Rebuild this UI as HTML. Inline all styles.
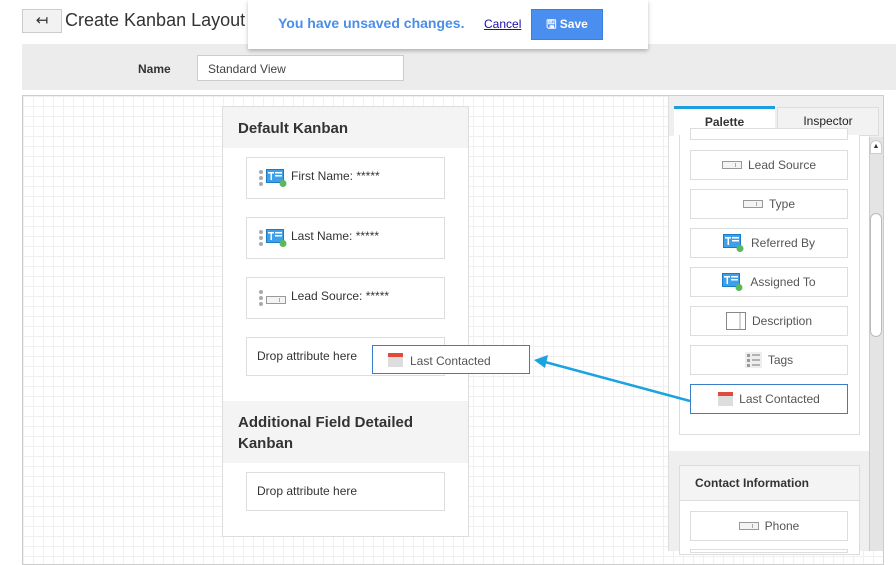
<!DOCTYPE html>
<html><head><meta charset="utf-8"><style>
*{box-sizing:border-box;margin:0;padding:0}
body{width:896px;height:551px;overflow:hidden;background:#fff;font-family:"Liberation Sans",Arial,sans-serif;color:#333;position:relative}
.abs{position:absolute}
.grid{background-color:#fff;background-image:linear-gradient(#f0f0f0 1px,transparent 1px),linear-gradient(90deg,#f0f0f0 1px,transparent 1px);background-size:10px 10px}
.field{position:absolute;left:246px;width:199px;background:#fff;border:1px solid #ddd;font-size:12px;color:#333}
.pitem{position:absolute;left:690px;width:158px;height:30px;background:#fff;border:1px solid #ddd;font-size:12px;color:#555;display:flex;align-items:center;justify-content:center;gap:6px}
.sel{display:inline-block;width:20px;height:8px;border:1px solid #999;background:#f4f4f4;position:relative}
.sel:after{content:"";position:absolute;right:1px;top:1px;width:4px;height:4px;border-left:1px solid #aaa}
.dots{position:absolute;left:12px;top:12px;width:4px}
.dots i{display:block;width:4px;height:4px;border-radius:2px;background:#aaa;margin-bottom:2px}
</style></head><body>
<div class="abs" style="left:22px;top:9px;width:40px;height:24px;border:1px solid #ccc;background:#f2f2f2;text-align:center;font-size:15px;line-height:21px">&#8612;</div>
<div class="abs" style="left:65px;top:10px;font-size:18px;color:#333">Create Kanban Layout</div>
<div class="abs" style="left:22px;top:44px;width:874px;height:46px;background:#ececec"></div>
<div class="abs" style="left:138px;top:62px;font-size:12px;font-weight:bold">Name</div>
<div class="abs" style="left:197px;top:55px;width:207px;height:26px;background:#fff;border:1px solid #ccc;font-size:12px;padding:6px 10px;color:#444">Standard View</div>
<div class="abs" style="left:248px;top:0;width:400px;height:49px;background:#fff;box-shadow:0 2px 4px rgba(0,0,0,.25)"></div>
<div class="abs" style="left:278px;top:15px;font-size:14px;font-weight:bold;color:#4a8ee8">You have unsaved changes.</div>
<div class="abs" style="left:484px;top:17px;font-size:12px;color:#1a0dab;text-decoration:underline">Cancel</div>
<div class="abs" style="left:531px;top:9px;width:72px;height:31px;background:#4a8ef0;border:1px solid #3a7ee0;color:#fff;font-size:12px;font-weight:bold;line-height:29px;text-align:center">&#128427; Save</div>
<div class="abs grid" style="left:22px;top:95px;width:862px;height:470px;border:1px solid #ccc"></div>
<div class="abs" style="left:222px;top:106px;width:247px;height:431px;background:#fff;border:1px solid #ddd"></div>
<div class="abs" style="left:223px;top:107px;width:245px;height:41px;background:#f4f4f4;font-size:15px;font-weight:bold;padding:13px 15px">Default Kanban</div>
<div class="field" style="top:157px;height:42px"><div class="dots"><i></i><i></i><i></i></div>
<svg class="abs" style="left:19px;top:11px" width="22" height="19"><rect x="0.5" y="0.5" width="17" height="13" fill="#3fa0e8" stroke="#1a7cc8"/><rect x="2" y="3" width="6" height="1.5" fill="#fff"/><rect x="4.5" y="3" width="1.5" height="8" fill="#fff"/><rect x="9" y="3" width="7" height="1.5" fill="#fff"/><rect x="9" y="6" width="7" height="1.5" fill="#fff"/><circle cx="17" cy="14.5" r="3.5" fill="#5cb85c"/></svg>
<span class="abs" style="left:44px;top:11px">First Name: *****</span></div>
<div class="field" style="top:217px;height:42px"><div class="dots"><i></i><i></i><i></i></div>
<svg class="abs" style="left:19px;top:11px" width="22" height="19"><rect x="0.5" y="0.5" width="17" height="13" fill="#3fa0e8" stroke="#1a7cc8"/><rect x="2" y="3" width="6" height="1.5" fill="#fff"/><rect x="4.5" y="3" width="1.5" height="8" fill="#fff"/><rect x="9" y="3" width="7" height="1.5" fill="#fff"/><rect x="9" y="6" width="7" height="1.5" fill="#fff"/><circle cx="17" cy="14.5" r="3.5" fill="#5cb85c"/></svg>
<span class="abs" style="left:44px;top:11px">Last Name: *****</span></div>
<div class="field" style="top:277px;height:42px"><div class="dots"><i></i><i></i><i></i></div>
<span class="sel abs" style="left:19px;top:15px"></span>
<span class="abs" style="left:44px;top:11px">Lead Source: *****</span></div>
<div class="field" style="top:337px;height:39px"><span class="abs" style="left:10px;top:11px">Drop attribute here</span></div>
<div class="abs" style="left:223px;top:401px;width:245px;height:62px;background:#f4f4f4;font-size:15px;font-weight:bold;padding:11px 15px;line-height:21px">Additional Field Detailed Kanban</div>
<div class="field" style="top:472px;height:39px"><span class="abs" style="left:10px;top:11px">Drop attribute here</span></div>
<div class="abs" style="left:372px;top:345px;width:158px;height:29px;background:#fff;border:1px solid #3a7ec8;font-size:12px;color:#555">
<svg class="abs" style="left:15px;top:7px" width="15" height="14"><rect width="15" height="4" fill="#e04a3a"/><rect y="4" width="15" height="10" fill="#ddd"/></svg>
<span class="abs" style="left:37px;top:8px">Last Contacted</span></div>
<div class="abs" style="left:668px;top:96px;width:215px;height:455px;background:#efefef;border-left:1px solid #ddd"></div>
<div class="abs" style="left:674px;top:106px;width:101px;height:30px;background:#fff;border-top:3px solid #1a9ee0;font-size:12px;font-weight:bold;text-align:center;line-height:26px">Palette</div>
<div class="abs" style="left:777px;top:107px;width:102px;height:29px;background:#f2f2f2;border:1px solid #ddd;font-size:12px;text-align:center;line-height:27px;color:#222">Inspector</div>
<div class="abs" style="left:669px;top:136px;width:200px;height:315px;background:#fff"></div>
<div class="abs" style="left:679px;top:135px;width:181px;height:300px;background:#fff;border:1px solid #ddd;border-top:none"></div>
<div class="abs" style="left:690px;top:128px;width:158px;height:12px;border:1px solid #ddd;background:#fff"></div>
<div class="pitem" style="top:150px"><span class="sel"></span>Lead Source</div>
<div class="pitem" style="top:189px"><span class="sel"></span>Type</div>
<div class="pitem" style="top:228px"><svg width="22" height="19"><rect x="0.5" y="0.5" width="17" height="13" fill="#3fa0e8" stroke="#1a7cc8"/><rect x="2" y="3" width="6" height="1.5" fill="#fff"/><rect x="4.5" y="3" width="1.5" height="8" fill="#fff"/><rect x="9" y="3" width="7" height="1.5" fill="#fff"/><rect x="9" y="6" width="7" height="1.5" fill="#fff"/><circle cx="17" cy="14.5" r="3.5" fill="#5cb85c"/></svg>Referred By</div>
<div class="pitem" style="top:267px"><svg width="22" height="19"><rect x="0.5" y="0.5" width="17" height="13" fill="#3fa0e8" stroke="#1a7cc8"/><rect x="2" y="3" width="6" height="1.5" fill="#fff"/><rect x="4.5" y="3" width="1.5" height="8" fill="#fff"/><rect x="9" y="3" width="7" height="1.5" fill="#fff"/><rect x="9" y="6" width="7" height="1.5" fill="#fff"/><circle cx="17" cy="14.5" r="3.5" fill="#5cb85c"/></svg>Assigned To</div>
<div class="pitem" style="top:306px"><svg width="20" height="18"><rect x="0.5" y="0.5" width="19" height="17" fill="#fff" stroke="#888"/><line x1="14" y1="1" x2="14" y2="17" stroke="#aaa"/></svg>Description</div>
<div class="pitem" style="top:345px"><svg width="17" height="16"><rect width="17" height="16" fill="#eee"/><g stroke="#777"><line x1="7" y1="3" x2="15" y2="3"/><line x1="7" y1="8" x2="15" y2="8"/><line x1="7" y1="13" x2="15" y2="13"/></g><g fill="#999"><rect x="2" y="2" width="3" height="3"/><rect x="2" y="7" width="3" height="3"/><rect x="2" y="12" width="3" height="3"/></g></svg>Tags</div>
<div class="pitem" style="top:384px;border-color:#3a7ec8"><svg width="15" height="14"><rect width="15" height="4" fill="#e04a3a"/><rect y="4" width="15" height="10" fill="#ddd"/></svg>Last Contacted</div>
<div class="abs" style="left:869px;top:137px;width:14px;height:414px;background:#e4e4e4;border-left:1px solid #ccc"></div>
<div class="abs" style="left:870px;top:213px;width:12px;height:124px;background:#fff;border:1px solid #bbb;border-radius:6px"></div>
<div class="abs" style="left:870px;top:140px;width:12px;height:14px;background:#fff;border:1px solid #ccc;border-radius:6px 6px 0 0;font-size:7px;text-align:center;line-height:12px">&#9650;</div>
<div class="abs" style="left:669px;top:451px;width:200px;height:100px;background:#efefef"></div>
<div class="abs" style="left:679px;top:465px;width:181px;height:90px;background:#fff;border:1px solid #ddd"></div>
<div class="abs" style="left:680px;top:466px;width:179px;height:35px;background:#f4f4f4;border-bottom:1px solid #ddd;font-size:12px;font-weight:bold;padding:10px 15px">Contact Information</div>
<div class="pitem" style="top:511px"><span class="sel"></span>Phone</div>
<div class="abs" style="left:690px;top:549px;width:158px;height:4px;border:1px solid #ddd"></div>
<svg class="abs" style="left:0;top:0" width="896" height="551"><line x1="690" y1="401" x2="545" y2="362" stroke="#1aa3e0" stroke-width="2.5"/><polygon points="534,360 548,355 545,368" fill="#1aa3e0"/></svg>
</body></html>
